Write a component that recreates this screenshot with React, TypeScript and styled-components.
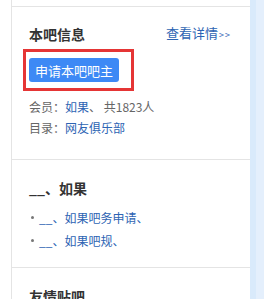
import {createGlobalStyle, styled} from "styled-components";

const GlobalStyle = createGlobalStyle`
  html, body {
    margin: 0;
    padding: 0;
    background: #ffffff;
  }
  body {
    font-family: "Noto Sans CJK SC", "Liberation Sans", sans-serif;
    color: #333333;
  }
`;

const Page = styled.div`
  display: flex;
  width: 264px;
  height: 299px;
  overflow: hidden;
  padding-left: 11px;
  box-sizing: border-box;
`;

const Aside = styled.div`
  width: 239px;
  flex-shrink: 0;
  border-left: 1px solid #e4e4e4;
  box-sizing: border-box;
  background: #ffffff;
`;

const Strip = styled.div`
  flex: 1;
  display: flex;
  background: #d9eafb;
`;

const StripInner = styled.div`
  margin-left: 6px;
  flex: 1;
  background: #e4effc;
`;

const Section = styled.div<{$top?: number; $bottom?: number}>`
  padding: ${p => p.$top ?? 0}px 0 ${p => p.$bottom ?? 0}px 17px;
  border-bottom: 1px solid #e4e4e4;
`;

const TitleRow = styled.div`
  display: flex;
  align-items: center;
  justify-content: space-between;
  height: 20px;
  padding-right: 19px;
`;

const Title = styled.div`
  font-size: 14px;
  font-weight: bold;
  line-height: 20px;
  color: #333333;
`;

const More = styled.a`
  font-size: 13px;
  color: #2d64b3;
  text-decoration: none;
  line-height: 20px;
`;

const Arrows = styled.span`
  font-size: 9px;
  margin-left: 1px;
  letter-spacing: 1px;
`;

const Highlight = styled.div`
  display: inline-block;
  margin: 5px 0 0 -6px;
  padding: 6px 12px 6px 3px;
  border: 3px solid #e53535;
`;

const ApplyButton = styled.button`
  width: 90px;
  height: 24px;
  border: none;
  border-radius: 3px;
  background: #3d89f5;
  color: #ffffff;
  font-family: inherit;
  font-size: 13px;
  padding: 0;
  display: block;
`;

const InfoLines = styled.div`
  margin-top: 5px;
`;

const InfoLine = styled.div`
  font-size: 12px;
  line-height: 21px;
  color: #666666;
`;

const Link = styled.a`
  color: #2d64b3;
  text-decoration: none;
`;

const List = styled.ul`
  list-style: none;
  margin: 8px 0 0;
  padding: 0 0 0 2px;
`;

const Item = styled.li`
  font-size: 12px;
  line-height: 23px;
  color: #666666;
  display: flex;
  align-items: center;
  gap: 5px;
`;

const Dot = styled.span`
  width: 3px;
  height: 3px;
  border-radius: 50%;
  background: #777777;
`;

export default function App() {
  return (
    <>
      <GlobalStyle/>
      <Page>
        <Aside>
          <Section $top={6}/>
          <Section $top={17} $bottom={21}>
            <TitleRow>
              <Title>本吧信息</Title>
              <More href="#">查看详情<Arrows>&gt;&gt;</Arrows></More>
            </TitleRow>
            <Highlight>
              <ApplyButton>申请本吧吧主</ApplyButton>
            </Highlight>
            <InfoLines>
              <InfoLine>会员：<Link href="#">如果</Link>、 共1823人</InfoLine>
              <InfoLine>目录：<Link href="#">网友俱乐部</Link></InfoLine>
            </InfoLines>
          </Section>
          <Section $top={18} $bottom={15}>
            <Title>__、如果</Title>
            <List>
              <Item><Dot/><Link href="#">__、如果吧务申请、</Link></Item>
              <Item><Dot/><Link href="#">__、如果吧规、</Link></Item>
            </List>
          </Section>
          <Section $top={18}>
            <Title>友情贴吧</Title>
          </Section>
        </Aside>
        <Strip>
          <StripInner/>
        </Strip>
      </Page>
    </>
  );
}
